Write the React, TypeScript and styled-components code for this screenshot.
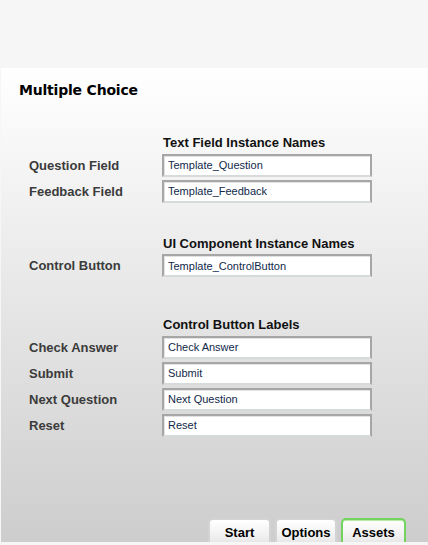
import React from "react";
import styled, { createGlobalStyle } from "styled-components";

const Global = createGlobalStyle`
  html, body { margin: 0; padding: 0; background: #f6f6f6; }
  body { font-family: "Liberation Sans", Arial, sans-serif; }
  * { box-sizing: border-box; }
`;

const Page = styled.div`
  width: 428px;
  height: 545px;
  padding-top: 68px;
  padding-left: 1px;
  background: #f6f6f6;
`;

const Panel = styled.div`
  height: 474px;
  display: flex;
  flex-direction: column;
  background: linear-gradient(to bottom, #ffffff 0%, #cdcdcd 100%);
`;

const Title = styled.h1`
  margin: 0;
  padding: 12px 0 0 18px;
  height: 47px;
  font-family: "DejaVu Sans", Verdana, sans-serif;
  font-weight: bold;
  font-size: 14px;
  line-height: 20px;
  color: #000;
  letter-spacing: -0.2px;
`;

const Section = styled.section<{ $top: number }>`
  margin-top: ${(p) => p.$top}px;
  display: grid;
  grid-template-columns: 133px 210px;
  row-gap: 3px;
  padding-left: 28px;
`;

const Header = styled.div`
  grid-column: 2;
  font-size: 13px;
  font-weight: bold;
  line-height: 16px;
  color: #111;
  padding-left: 1px;
  margin-bottom: -0.5px;
`;

const Label = styled.div`
  grid-column: 1;
  display: flex;
  align-items: center;
  font-size: 13px;
  font-weight: bold;
  color: #3b3b3b;
  height: 23px;
`;

const Field = styled.input`
  grid-column: 2;
  width: 210px;
  height: 23px;
  margin: 0;
  padding: 0 0 0 4px;
  border: 2px solid #a6a6a6;
  border-bottom-color: #d6dada;
  box-shadow: inset 1px 1px 0 #e2e2e2;
  background: #fff;
  font-family: "Liberation Sans", Arial, sans-serif;
  font-size: 11px;
  color: #10294a;
  outline: none;
`;

const Tabs = styled.div`
  margin-top: auto;
  display: flex;
  justify-content: flex-end;
  gap: 4px;
  padding-right: 22px;
`;

const Tab = styled.button<{ $active?: boolean; $w: number }>`
  width: ${(p) => p.$w}px;
  height: 24px;
  margin: 0;
  padding: 2px 0 0 0;
  border: ${(p) => (p.$active ? "2px solid #73d35f" : "2px solid #d2d4d4")};
  border-bottom: none;
  border-radius: 5px 5px 0 0;
  box-shadow: ${(p) =>
    p.$active ? "inset 0 1px 0 #b8eaa8" : "inset 0 1px 0 #ffffff"};
  background: linear-gradient(to bottom, #ffffff 0%, #f3f3f3 60%, #e8e8e8 100%);
  font-family: "Liberation Sans", Arial, sans-serif;
  font-size: 13px;
  font-weight: bold;
  color: #000;
  cursor: pointer;
`;

type Row = { label: string; value: string };

const groups: { top: number; header: string; rows: Row[] }[] = [
  {
    top: 20,
    header: "Text Field Instance Names",
    rows: [
      { label: "Question Field", value: "Template_Question" },
      { label: "Feedback Field", value: "Template_Feedback" },
    ],
  },
  {
    top: 33,
    header: "UI Component Instance Names",
    rows: [{ label: "Control Button", value: "Template_ControlButton" }],
  },
  {
    top: 40,
    header: "Control Button Labels",
    rows: [
      { label: "Check Answer", value: "Check Answer" },
      { label: "Submit", value: "Submit" },
      { label: "Next Question", value: "Next Question" },
      { label: "Reset", value: "Reset" },
    ],
  },
];

export default function App() {
  return (
    <Page>
      <Global />
      <Panel>
        <Title>Multiple Choice</Title>
        {groups.map((g) => (
          <Section key={g.header} $top={g.top}>
            <Header>{g.header}</Header>
            {g.rows.map((r) => (
              <React.Fragment key={r.label}>
                <Label>{r.label}</Label>
                <Field defaultValue={r.value} />
              </React.Fragment>
            ))}
          </Section>
        ))}
        <Tabs>
          <Tab $w={63}>Start</Tab>
          <Tab $w={62}>Options</Tab>
          <Tab $w={65} $active>
            Assets
          </Tab>
        </Tabs>
      </Panel>
    </Page>
  );
}
